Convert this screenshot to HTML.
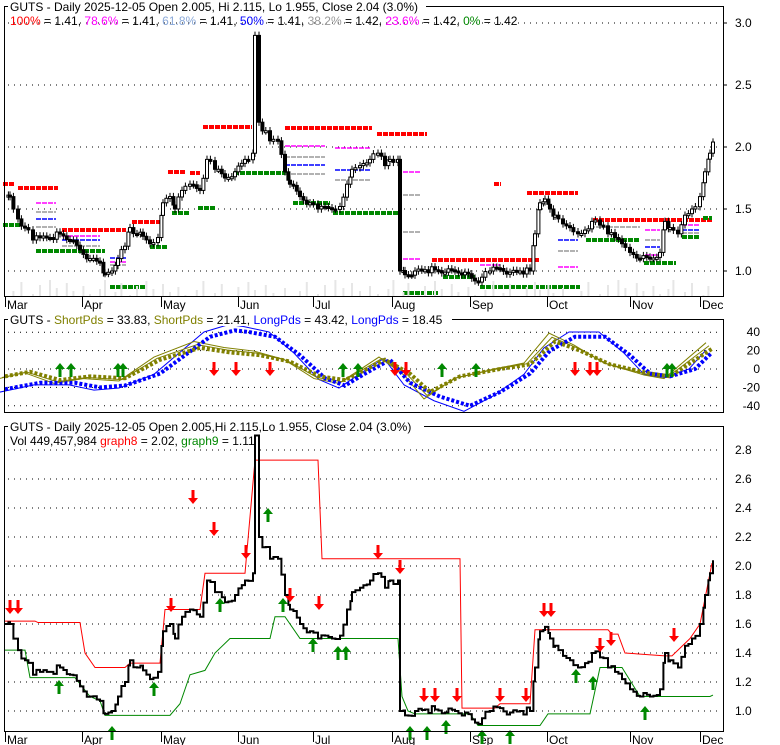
<!DOCTYPE html>
<html><head><meta charset="utf-8"><style>
html,body{margin:0;padding:0;background:#fff;}
svg{display:block;font-family:"Liberation Sans",sans-serif;}
</style></head><body>
<svg id="s" width="780" height="745" viewBox="0 0 780 745" xmlns="http://www.w3.org/2000/svg">
<rect width="780" height="745" fill="#fff"/>
<g id="g"></g>
<rect x="4.5" y="6.5" width="719" height="290" fill="none" stroke="#000"/>
<rect x="4.5" y="319.5" width="719" height="93" fill="none" stroke="#000"/>
<rect x="4.5" y="426.5" width="719" height="305" fill="none" stroke="#000"/>
<rect x="8" y="0" width="418" height="13" fill="#fff"/>
<text x="10" y="11" font-size="12">GUTS - Daily 2025-12-05 Open 2.005, Hi 2.115, Lo 1.955, Close 2.04 (3.0%)</text>
<text x="10" y="25" font-size="12"><tspan fill="#f00">100%</tspan> = 1.41, <tspan fill="#f0f">78.6%</tspan> = 1.41, <tspan fill="#8aa8d8">61.8%</tspan> = 1.41, <tspan fill="#00f">50%</tspan> = 1.41, <tspan fill="#999">38.2%</tspan> = 1.42, <tspan fill="#f0f">23.6%</tspan> = 1.42, <tspan fill="#080">0%</tspan> = 1.42</text>
<rect x="8" y="313" width="444" height="13" fill="#fff"/>
<text x="10" y="324" font-size="12">GUTS - <tspan fill="#808000">ShortPds</tspan> = 33.83, <tspan fill="#808000">ShortPds</tspan> = 21.41, <tspan fill="#00f">LongPds</tspan> = 43.42, <tspan fill="#00f">LongPds</tspan> = 18.45</text>
<rect x="8" y="420" width="416" height="13" fill="#fff"/>
<text x="10" y="431" font-size="12">GUTS - Daily 2025-12-05 Open 2.005,Hi 2.115,Lo 1.955, Close 2.04 (3.0%)</text>
<text x="10" y="445" font-size="12">Vol 449,457,984 <tspan fill="#f00">graph8</tspan> = 2.02, <tspan fill="#080">graph9</tspan> = 1.11</text>
</svg>
<script>
var g=document.getElementById('g'),NS='http://www.w3.org/2000/svg';
function el(t,a){var e=document.createElementNS(NS,t);for(var k in a)e.setAttribute(k,a[k]);g.appendChild(e);return e;}
function txt(x,y,s,anchor){var e=el('text',{x:x,y:y,'font-size':12,'text-anchor':anchor||'start'});e.textContent=s;}
function dots(y,x1,x2){el('line',{x1:x1,y1:y,x2:x2,y2:y,stroke:'#000','stroke-dasharray':'1,5'});}
var p1=function(p){return 271-(p-1)*124;};
[1.0,1.5,2.0,2.5,3.0].forEach(function(v){dots(p1(v),8,720);el('line',{x1:723,y1:p1(v),x2:727,y2:p1(v),stroke:'#000'});txt(735,p1(v)+4,v.toFixed(1));});
var p2=function(v){return 369-v*0.92;};
[40,20,0,-20,-40].forEach(function(v){dots(p2(v),8,720);txt(760,p2(v)+4,String(v),'end');});
var p3=function(p){return 711-(p-1)*145;};
[1.0,1.2,1.4,1.6,1.8,2.0,2.2,2.4,2.6,2.8].forEach(function(v){dots(p3(v),8,720);txt(735,p3(v)+4,v.toFixed(1));});
var months=[['Mar',5],['Apr',82],['May',161],['Jun',238],['Jul',313],['Aug',392],['Sep',470],['Oct',547],['Nov',630],['Dec',700]];
months.forEach(function(m){[[296,304,309],[731,739,744]].forEach(function(r){el('line',{x1:m[1]+0.5,y1:r[0],x2:m[1]+0.5,y2:r[1]+3,stroke:'#000'});txt(m[1]+2,r[2],m[0]);});});
var D=[[5,1.6],[10,1.6],[18,1.42],[25,1.35],[33,1.25],[40,1.27],[50,1.27],[60,1.3],[70,1.25],[80,1.17],[90,1.1],[100,1.07],[105,0.98],[112,1.0],[118,1.1],[125,1.2],[130,1.35],[137,1.3],[143,1.28],[150,1.22],[158,1.27],[163,1.55],[170,1.6],[175,1.5],[182,1.65],[190,1.7],[200,1.65],[207,1.9],[215,1.82],[225,1.75],[235,1.8],[245,1.9],[253,1.95],[255,2.9],[259,2.2],[270,2.05],[278,2.05],[285,1.8],[290,1.7],[300,1.6],[310,1.55],[318,1.5],[325,1.52],[332,1.5],[340,1.52],[347,1.7],[352,1.82],[360,1.85],[370,1.9],[378,1.95],[385,1.85],[390,1.9],[398,1.9],[400,1.0],[405,0.97],[415,1.0],[425,1.01],[435,1.01],[445,0.99],[455,1.0],[465,0.99],[475,0.92],[482,0.95],[490,1.0],[500,1.02],[510,0.99],[520,1.0],[530,1.0],[535,1.3],[540,1.55],[545,1.58],[550,1.5],[555,1.45],[563,1.38],[570,1.35],[578,1.3],[585,1.33],[592,1.4],[600,1.37],[608,1.3],[615,1.27],[622,1.22],[630,1.15],[640,1.1],[650,1.1],[660,1.15],[665,1.4],[670,1.35],[678,1.3],[685,1.45],[692,1.5],[700,1.6],[705,1.8],[710,1.95],[713,2.04]];
var S=[];for(var i=0;i<D.length-1;i++){var a=D[i],b=D[i+1];S.push(a);for(var x=a[0]+3.4;x<b[0]-1.5;x+=3.4){var f=(x-a[0])/(b[0]-a[0]);S.push([x,a[1]+(b[1]-a[1])*f+((i*7+Math.round(x))%5-2)*0.012]);}}S.push(D[D.length-1]);
function seg(c,y,x1,x2,w){el('line',{x1:x1,y1:y,x2:x2,y2:y,stroke:c,'stroke-width':w||4,'stroke-dasharray':'5,1'});}
[[184,3,14],[188,18,58],[230,62,126],[222,132,160],[172,168,186],[173,190,200],[127,203,252],[128,285,372],[134,377,427],[260,432,540],[184,494,501],[193,527,578],[220,593,712]].forEach(function(s){seg('#f00',s[0],s[1],s[2]);});
[[225,3,20],[251,36,105],[247,150,167],[213,172,190],[208,198,215],[173,234,287],[203,293,330],[213,333,398],[287,110,145],[293,403,438],[277,443,475],[287,480,580],[240,586,640],[263,644,676],[237,682,699],[218,703,712]].forEach(function(s){seg('#080',s[0],s[1],s[2]);});
[['#f0f',203,36,56],['#999',212,36,56],['#00f',219,36,56],['#999',227,36,56],['#f0f',236,62,100],['#00f',240,62,100],['#999',246,62,100],['#f0f',262,110,126],['#00f',258,110,126],['#999',265,110,126],['#f0f',146,285,325],['#999',157,285,325],['#00f',165,285,325],['#999',174,285,325],['#f0f',148,335,370],['#00f',170,335,370],['#999',180,335,370],['#f0f',172,403,420],['#999',195,403,420],['#f0f',259,403,420],['#999',232,403,420],['#f0f',265,480,500],['#00f',240,558,578],['#999',251,558,578],['#f0f',267,558,578],['#999',227,590,640],['#f0f',230,645,660],['#999',240,645,660],['#00f',247,645,660],['#f0f',255,645,660],['#f0f',225,682,700],['#00f',230,682,700],['#999',233,682,700]].forEach(function(s){seg(s[0],s[1],s[2],s[3],1.5);});
for(var i=0;i<S.length;i++){var x=S[i][0];if((i*7)%5<2){el('line',{x1:x,y1:296,x2:x,y2:296-((i*13)%17),stroke:'#e6e6e6','stroke-width':2});}}
for(var i=1;i<S.length;i++){var x=S[i][0],o=S[i-1][1],c=S[i][1];var hi=Math.max(o,c)+0.03,lo=Math.min(o,c)-0.03;
el('line',{x1:x,y1:p1(hi),x2:x,y2:p1(lo),stroke:'#000'});
var t=p1(Math.max(o,c)),h=Math.max(2,p1(Math.min(o,c))-t);
el('rect',{x:x-1.5,y:t,width:3,height:h,fill:c>o?'#fff':'#000',stroke:'#000','stroke-width':1});}
function pl(pts,c,w,dash){el('polyline',{points:pts.map(function(p){return p[0]+','+p2(p[1]);}).join(' '),fill:'none',stroke:c,'stroke-width':w,'stroke-dasharray':dash||'none'});}
var B=[[5,-22],[40,-15],[75,-15],[100,-20],[125,-18],[160,-5],[185,15],[210,35],[235,42],[250,40],[275,35],[300,15],[325,-10],[345,-18],[365,-5],[390,10],[410,-15],[440,-30],[470,-40],[500,-25],[530,-5],[550,20],[575,35],[605,35],[630,15],[650,-5],[670,-8],[695,0],[712,18]];
var O=[[5,-8],[30,-3],[60,-12],[90,-8],[125,-10],[160,10],[200,23],[230,18],[260,15],[290,8],[320,-8],[345,-12],[385,10],[410,-5],[430,-25],[460,-8],[500,0],[530,5],[555,30],[580,20],[610,5],[650,-5],[670,-8],[712,22]];
function shift(a,d,k){return a.map(function(p){return [p[0]+d,p[1]*k];});}
pl(shift(B,-6,1.15),'#00f',1);pl(shift(O,-6,1.3),'#808000',1);pl(shift(O,-3,1.15),'#808000',1);
pl(B,'#00f',4,'3,2');pl(O,'#808000',4,'3,2');
function up(x,yb,c){el('polygon',{points:(x-5)+','+(yb-8)+' '+x+','+(yb-14)+' '+(x+5)+','+(yb-8)+' '+(x+1.5)+','+(yb-8)+' '+(x+1.5)+','+yb+' '+(x-1.5)+','+yb+' '+(x-1.5)+','+(yb-8),fill:c||'#080'});}
function dn(x,yt,c){el('polygon',{points:(x-5)+','+(yt+8)+' '+x+','+(yt+14)+' '+(x+5)+','+(yt+8)+' '+(x+1.5)+','+(yt+8)+' '+(x+1.5)+','+yt+' '+(x-1.5)+','+yt+' '+(x-1.5)+','+(yt+8),fill:c||'#f00'});}
[60,71,118,123,343,358,442,476,667,672].forEach(function(x){up(x,377);});
[214,236,270,395,406,575,590,597].forEach(function(x){dn(x,362);});
function pl3(pts,c){el('polyline',{points:pts.map(function(p){return p[0]+','+p3(p[1]);}).join(' '),fill:'none',stroke:c,'stroke-width':1});}
pl3([[5,1.62],[35,1.62],[38,1.61],[80,1.61],[85,1.4],[95,1.3],[125,1.3],[130,1.33],[160,1.33],[165,1.7],[200,1.7],[205,1.95],[245,1.95],[255,2.73],[318,2.73],[322,2.05],[460,2.05],[462,1.02],[495,1.02],[500,1.05],[530,1.05],[535,1.56],[608,1.56],[612,1.53],[618,1.53],[625,1.4],[665,1.38],[672,1.38],[690,1.5],[700,1.6],[712,2.02]],'#f00');
pl3([[5,1.42],[25,1.42],[30,1.23],[75,1.23],[90,1.1],[100,1.07],[105,0.97],[170,0.97],[180,1.05],[190,1.25],[205,1.28],[215,1.4],[230,1.5],[270,1.5],[275,1.65],[285,1.65],[300,1.5],[398,1.5],[402,1.1],[408,1.0],[415,0.98],[470,0.98],[478,0.9],[540,0.9],[548,0.98],[590,0.98],[600,1.3],[622,1.3],[640,1.1],[710,1.1],[713,1.11]],'#080');
var pts=[];for(var i=0;i<S.length;i++){var x=S[i][0];if(i>0)pts.push(x+','+p3(S[i-1][1]));pts.push(x+','+p3(S[i][1]));}
el('polyline',{points:pts.join(' '),fill:'none',stroke:'#000','stroke-width':2});
[[10,600],[18,600],[171,598],[193,490],[214,522],[246,545],[290,588],[319,596],[378,545],[400,560],[424,688],[435,688],[457,688],[500,688],[526,688],[544,603],[551,603],[600,638],[611,632],[674,628]].forEach(function(a){dn(a[0],a[1]);});
[[59,694],[112,740],[154,696],[220,612],[283,612],[313,652],[338,660],[346,660],[410,740],[427,740],[446,734],[482,744],[510,744],[576,683],[593,690],[645,720],[268,522]].forEach(function(a){up(a[0],a[1]);});
</script>
</body></html>
